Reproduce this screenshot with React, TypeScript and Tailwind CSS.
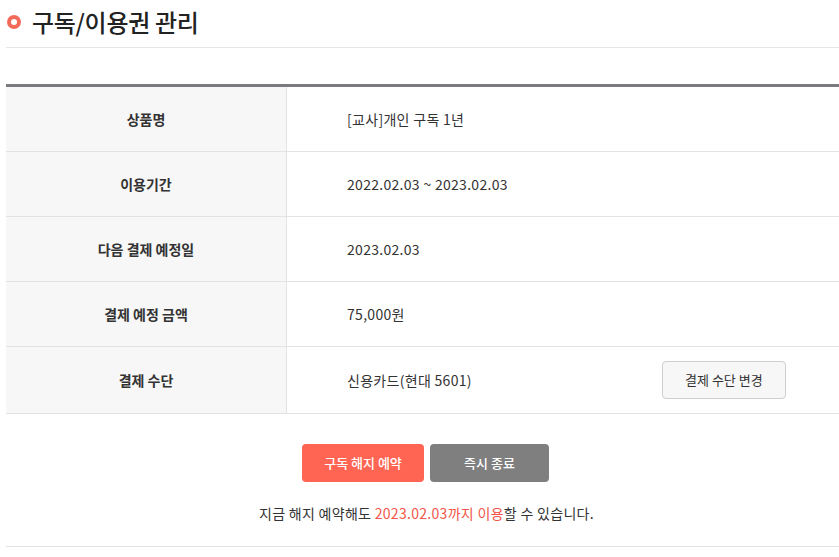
import React from "react";

const rows: { label: string; value: string; action?: boolean }[] = [
  { label: "상품명", value: "[교사]개인 구독 1년" },
  { label: "이용기간", value: "2022.02.03 ~ 2023.02.03" },
  { label: "다음 결제 예정일", value: "2023.02.03" },
  { label: "결제 예정 금액", value: "75,000원" },
  { label: "결제 수단", value: "신용카드(현대 5601)", action: true },
];

export default function App() {
  return (
    <div
      className="w-[839px] h-[557px] bg-white pl-[6px] text-[#333]"
      style={{ fontFamily: '"Noto Sans CJK KR", "Noto Sans", sans-serif' }}
    >
      <div className="flex items-center h-[48px] border-b border-[#e5e5e5] pb-[4px]">
        <span className="ml-[1px] w-[14px] h-[14px] rounded-full border-[4px] border-[#f26a5a] bg-white" />
        <h1 className="ml-[11px] text-[24px] font-medium text-[#222] tracking-[-0.3px]">구독/이용권 관리</h1>
      </div>
      <div className="mt-[36px] border-t-[3px] border-[#7a7a7f]">
        {rows.map((r) => (
          <div key={r.label} className={`flex border-b border-[#e3e3e3] ${r.action ? "h-[67px]" : "h-[65px]"}`}>
            <div className="w-[281px] shrink-0 bg-[#f7f7f7] border-r border-[#e3e3e3] flex items-center justify-center text-[14px] font-bold text-[#333]">
              {r.label}
            </div>
            <div className="flex-1 flex items-center pl-[60px] text-[14px] text-[#333] tracking-[0.3px]">
              <span>{r.value}</span>
              {r.action && (
                <button className="ml-[190px] w-[124px] h-[38px] bg-[#f7f7f7] border border-[#cfcfcf] rounded-[4px] text-[13px] text-[#333] tracking-normal">
                  결제 수단 변경
                </button>
              )}
            </div>
          </div>
        ))}
      </div>
      <div className="flex justify-center gap-[6px] mt-[30px] pl-[6px]">
        <button className="w-[122px] h-[38px] rounded-[4px] bg-[#ff6552] text-white text-[13px] font-medium">구독 해지 예약</button>
        <button className="w-[119px] h-[38px] rounded-[4px] bg-[#7f7f7f] text-white text-[13px] font-medium">즉시 종료</button>
      </div>
      <p className="text-center text-[14px] text-[#333] mt-[21px] pl-[8px] tracking-[0.3px]">
        지금 해지 예약해도 <span className="text-[#f2564a]">2023.02.03까지 이용</span>할 수 있습니다.
      </p>
      <div className="mt-[22px] border-b border-[#e3e3e3]" />
    </div>
  );
}
